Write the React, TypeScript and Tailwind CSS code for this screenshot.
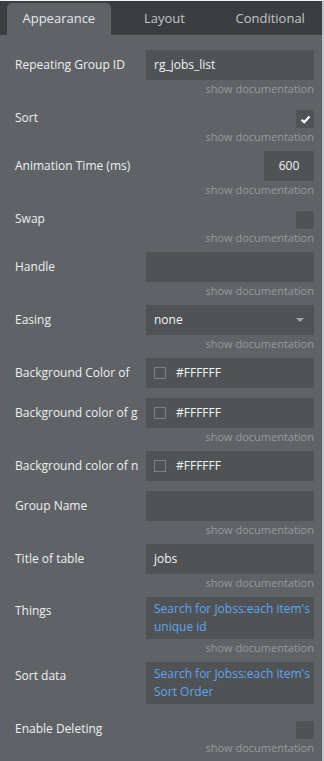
import React from 'react';

type Row =
  | { kind: 'text'; label: string; value?: string; doc: boolean }
  | { kind: 'number'; label: string; value: string; doc: boolean }
  | { kind: 'check'; label: string; checked: boolean; doc: boolean }
  | { kind: 'select'; label: string; value: string; doc: boolean }
  | { kind: 'color'; label: string; value: string; doc: boolean }
  | { kind: 'expr'; label: string; lines: string[]; doc: boolean };

const rows: Row[] = [
  { kind: 'text', label: 'Repeating Group ID', value: 'rg_jobs_list', doc: true },
  { kind: 'check', label: 'Sort', checked: true, doc: true },
  { kind: 'number', label: 'Animation Time (ms)', value: '600', doc: true },
  { kind: 'check', label: 'Swap', checked: false, doc: true },
  { kind: 'text', label: 'Handle', doc: true },
  { kind: 'select', label: 'Easing', value: 'none', doc: true },
  { kind: 'color', label: 'Background Color of', value: '#FFFFFF', doc: false },
  { kind: 'color', label: 'Background color of g', value: '#FFFFFF', doc: true },
  { kind: 'color', label: 'Background color of n', value: '#FFFFFF', doc: false },
  { kind: 'text', label: 'Group Name', doc: true },
  { kind: 'text', label: 'Title of table', value: 'jobs', doc: true },
  { kind: 'expr', label: 'Things', lines: ["Search for Jobss:each item's", 'unique id'], doc: true },
  { kind: 'expr', label: 'Sort data', lines: ["Search for Jobss:each item's", 'Sort Order'], doc: false },
  { kind: 'check', label: 'Enable Deleting', checked: false, doc: true },
];

const Label = ({ text }: { text: string }) => (
  <div className="w-[131px] whitespace-nowrap text-[12px] text-[#eef0f1]">{text}</div>
);

const Control = ({ row }: { row: Row }) => {
  switch (row.kind) {
    case 'text':
      return (
        <div className="w-[168px] h-[30px] bg-[#4f5356] flex items-center px-[8px] text-[12px] text-[#f2f3f4]">
          {row.value}
        </div>
      );
    case 'number':
      return (
        <div className="w-[50px] h-[30px] bg-[#4f5356] flex items-center justify-center text-[12px] text-[#f2f3f4]">
          {row.value}
        </div>
      );
    case 'check':
      return (
        <div className="w-[18px] h-[18px] bg-[#4f5356] rounded-[2px] flex items-center justify-center">
          {row.checked && (
            <svg width="11" height="9" viewBox="0 0 11 9">
              <path d="M1.5 4.8 L4.2 7.3 L9.5 1.6" fill="none" stroke="#ffffff" strokeWidth="2.2" />
            </svg>
          )}
        </div>
      );
    case 'select':
      return (
        <div className="w-[168px] h-[30px] bg-[#4f5356] flex items-center justify-between pl-[8px] pr-[10px] text-[12px] text-[#f2f3f4]">
          <span>{row.value}</span>
          <svg width="8" height="4" viewBox="0 0 8 4">
            <path d="M0 0 L8 0 L4 4 Z" fill="#a3a7aa" />
          </svg>
        </div>
      );
    case 'color':
      return (
        <div className="w-[168px] h-[30px] bg-[#4f5356] flex items-center pl-[8px] text-[12px] text-[#f2f3f4]">
          <div className="w-[12px] h-[12px] border border-[#7d8184]" />
          <span className="ml-[10px]">{row.value}</span>
        </div>
      );
    case 'expr':
      return (
        <div className="w-[168px] h-[42px] bg-[#4f5356] px-[8px] py-[3px] text-[12px] leading-[18px] text-[#62a4ec] whitespace-nowrap">
          {row.lines.map((l, i) => (
            <div key={i}>{l}</div>
          ))}
        </div>
      );
  }
};

const App = () => {
  return (
    <div className="w-[324px] h-[761px] bg-[#5f6367] border-t border-[#f4f4f4] border-r-2 border-r-[#c5c8ca] overflow-hidden" style={{ fontFamily: '"Open Sans", sans-serif' }}>
      <div className="h-[34px] bg-[#3a3e41] flex items-end pl-[7px] gap-[2px]">
        <div className="w-[104px] h-[32px] bg-[#5f6367] rounded-t-[5px] flex items-center justify-center text-[13px] text-[#e6e9ec]">
          Appearance
        </div>
        <div className="w-[104px] h-[32px] flex items-center justify-center text-[13px] text-[#c3c7ca]">Layout</div>
        <div className="w-[104px] h-[32px] flex items-center justify-center text-[13px] text-[#c3c7ca]">Conditional</div>
      </div>
      <div className="pt-[15px] pl-[15px] pr-[8px]">
        {rows.map((row, i) => (
          <div key={i} className={row.doc ? 'mb-[8px]' : 'mb-[10px]'}>
            {row.kind === 'check' ? (
              <div className="h-[25px] flex items-end justify-between">
                <div className="h-[16px] mb-[2px] flex items-center">
                  <Label text={row.label} />
                </div>
                <Control row={row} />
              </div>
            ) : row.kind === 'expr' ? (
              <div className="flex items-start justify-between">
                <div className="pt-[5px] leading-[18px]">
                  <Label text={row.label} />
                </div>
                <Control row={row} />
              </div>
            ) : (
              <div className="flex items-center justify-between">
                <Label text={row.label} />
                <Control row={row} />
              </div>
            )}
            {row.doc && (
              <div className="mt-[3px] text-right text-[11px] leading-[12px] text-[#979b9e]">show documentation</div>
            )}
          </div>
        ))}
      </div>
    </div>
  );
};

export default App;
